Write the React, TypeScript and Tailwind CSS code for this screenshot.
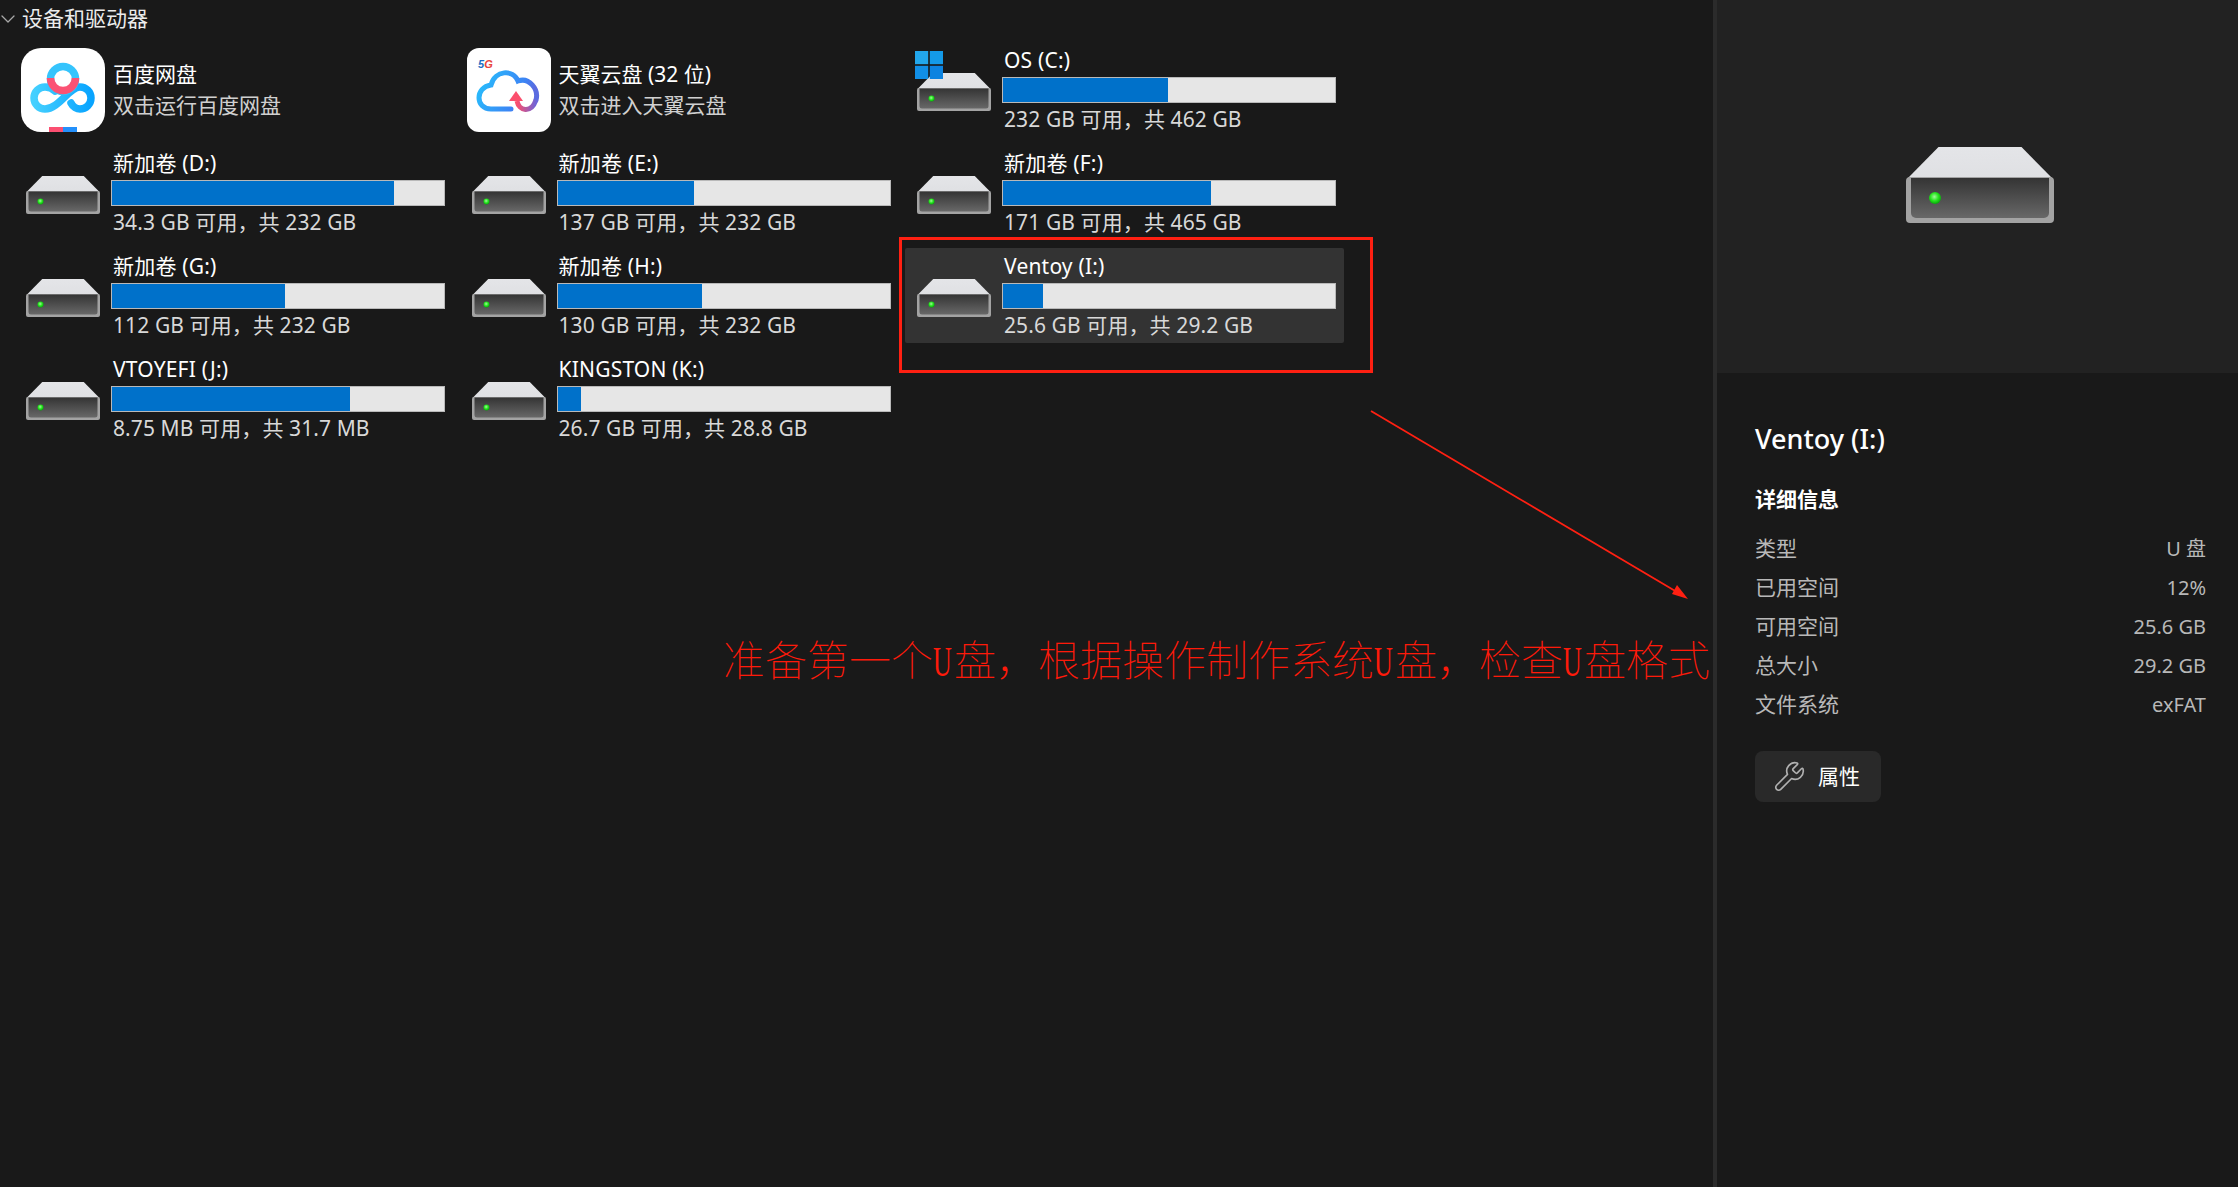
import React from 'react';
import { ChevronDown, Wrench } from 'lucide-react';

const font = { fontFamily: '"Noto Sans", "Noto Sans CJK SC", sans-serif' };

interface Drive {
  name: string;
  status: string;
  used: number;
  selected?: boolean;
  windows?: boolean;
}

function DriveIcon({ className }: { className: string }) {
  return (
    <svg viewBox="0 0 148 76" className={className}>
      <defs>
        <linearGradient id="driveFace" x1="0" y1="0" x2="0" y2="1">
          <stop offset="0" stopColor="#343434" />
          <stop offset="1" stopColor="#686868" />
        </linearGradient>
        <linearGradient id="driveTop" x1="0" y1="0" x2="0" y2="1">
          <stop offset="0" stopColor="#e4e5e8" />
          <stop offset="1" stopColor="#dfe0e3" />
        </linearGradient>
        <radialGradient id="driveLed" cx="0.45" cy="0.4" r="0.6">
          <stop offset="0" stopColor="#a4f79c" />
          <stop offset="0.55" stopColor="#27e61f" />
          <stop offset="1" stopColor="#07a80a" />
        </radialGradient>
      </defs>
      <path d="M32.5 0H115.5L147 32H1Z" fill="url(#driveTop)" />
      <rect x="0" y="30" width="148" height="46" rx="4" fill="#a3a3a3" />
      <path d="M5 31H143V66a5 5 0 0 1-5 5H10a5 5 0 0 1-5-5Z" fill="url(#driveFace)" />
      <circle cx="29" cy="51" r="6" fill="url(#driveLed)" />
    </svg>
  );
}

function WindowsLogo() {
  return (
    <svg viewBox="0 0 28 28" className="absolute left-[10px] top-[9px] h-[28px] w-[28px]">
      <rect x="0" y="0" width="13.2" height="13.2" fill="#22a7ec" />
      <rect x="14.8" y="0" width="13.2" height="13.2" fill="#149ae8" />
      <rect x="0" y="14.8" width="13.2" height="13.2" fill="#118fe6" />
      <rect x="14.8" y="14.8" width="13.2" height="13.2" fill="#0c83e0" />
    </svg>
  );
}

function BaiduIcon() {
  return (
    <svg viewBox="0 0 84 84" className="h-[84px] w-[84px]">
      <defs>
        <linearGradient id="baiduBlue" x1="0" y1="0" x2="1" y2="0">
          <stop offset="0" stopColor="#45d0ff" />
          <stop offset="1" stopColor="#08a4ff" />
        </linearGradient>
        <clipPath id="baiduClip">
          <rect width="84" height="84" rx="20" />
        </clipPath>
      </defs>
      <rect width="84" height="84" rx="20" fill="#fff" />
      <path
        d="M50 55C52 59 56 61 59 61A11 11 0 0 0 59 39C48 39 38 61 24 61A11 11 0 0 1 24 39C28 39 31 40 34 43"
        fill="none"
        stroke="url(#baiduBlue)"
        strokeWidth="7.5"
        strokeLinecap="round"
      />
      <circle cx="42" cy="31" r="12.5" fill="none" stroke="#35c4fd" strokeWidth="7.5" />
      <path d="M29.5 30A12.5 12.5 0 0 0 54.5 30" fill="none" stroke="#fb5274" strokeWidth="7.5" />
      <g clipPath="url(#baiduClip)">
        <rect x="28" y="79" width="14" height="5" fill="#fb4f71" />
        <rect x="42" y="79" width="14" height="5" fill="#2390fb" />
      </g>
    </svg>
  );
}

function TianyiIcon() {
  return (
    <svg viewBox="0 0 84 84" className="h-[84px] w-[84px]">
      <defs>
        <linearGradient id="cloudBlue" x1="0" y1="0" x2="1" y2="0.3">
          <stop offset="0" stopColor="#25c3fd" />
          <stop offset="0.8" stopColor="#3d83f4" />
          <stop offset="1" stopColor="#5a6be0" />
        </linearGradient>
        <linearGradient id="cloudTail" x1="0" y1="0" x2="1" y2="0">
          <stop offset="0" stopColor="#fb4f6d" />
          <stop offset="1" stopColor="#6d63d8" />
        </linearGradient>
      </defs>
      <rect width="84" height="84" rx="12" fill="#fff" />
      <text x="11" y="20" fontSize="11" fontWeight="700" fontStyle="italic" fontFamily="Liberation Sans, sans-serif">
        <tspan fill="#1c6fc4">5</tspan>
        <tspan fill="#e8443c">G</tspan>
      </text>
      <path
        d="M44 61H24C8 61 8 39 24 37C28 22 46 21 51 33C62 29 72 41 69 52"
        fill="none"
        stroke="url(#cloudBlue)"
        strokeWidth="5"
        strokeLinecap="round"
      />
      <path d="M50 53C52 63 64 66 69 52" fill="none" stroke="url(#cloudTail)" strokeWidth="5" />
      <path d="M49 43L42 53H56Z" fill="#fb4f6d" />
    </svg>
  );
}

function DriveTile({ drive }: { drive: Drive }) {
  return (
    <div
      className={
        'relative flex h-[95px] w-[439px] rounded-[2px] pr-2 ' + (drive.selected ? 'bg-[#333333]' : '')
      }
    >
      {drive.windows && <WindowsLogo />}
      <div className="flex w-[97px] shrink-0 justify-start pl-3 pt-[31px]">
        <DriveIcon className="h-[38px] w-[74px]" />
      </div>
      <div className="flex flex-1 flex-col">
        <div className="h-[35px] pl-[2px] text-[21px] leading-[36px] tracking-[0.2px] text-white">{drive.name}</div>
        <div className="h-[26px] border border-[#b9b9b9] bg-[#e6e6e6]">
          <div className="h-full bg-[#0071ca]" style={{ width: drive.used + '%' }} />
        </div>
        <div className="pl-[2px] text-[21px] leading-[33px] tracking-[0.1px] text-[#d8d8d8]">{drive.status}</div>
      </div>
    </div>
  );
}

function AppTile({ icon, name, desc }: { icon: React.ReactNode; name: string; desc: string }) {
  return (
    <div className="flex h-[95px] w-[439px] pl-[7px] pt-[6px]">
      <div className="h-[84px] w-[84px] shrink-0">{icon}</div>
      <div className="flex flex-col pl-2 pt-[10px]">
        <div className="text-[21px] leading-[32px] text-white">{name}</div>
        <div className="text-[21px] leading-[31px] text-[#d0d0d0]">{desc}</div>
      </div>
    </div>
  );
}

function NarrowU() {
  return <span className="inline-block w-[21px] origin-left scale-x-[0.62] font-normal">U</span>;
}

const rows: Drive[] = [
  { name: '新加卷 (D:)', status: '34.3 GB 可用，共 232 GB', used: 84.8 },
  { name: '新加卷 (E:)', status: '137 GB 可用，共 232 GB', used: 41 },
  { name: '新加卷 (F:)', status: '171 GB 可用，共 465 GB', used: 62.6 },
  { name: '新加卷 (G:)', status: '112 GB 可用，共 232 GB', used: 52 },
  { name: '新加卷 (H:)', status: '130 GB 可用，共 232 GB', used: 43.5 },
  { name: 'Ventoy (I:)', status: '25.6 GB 可用，共 29.2 GB', used: 12, selected: true },
  { name: 'VTOYEFI (J:)', status: '8.75 MB 可用，共 31.7 MB', used: 71.6 },
  { name: 'KINGSTON (K:)', status: '26.7 GB 可用，共 28.8 GB', used: 7.2 },
];

const details = [
  ['类型', 'U 盘'],
  ['已用空间', '12%'],
  ['可用空间', '25.6 GB'],
  ['总大小', '29.2 GB'],
  ['文件系统', 'exFAT'],
];

export default function App() {
  return (
    <div className="flex h-screen w-full overflow-hidden bg-[#191919]" style={font}>
      <div className="relative h-full w-[1713px] shrink-0">
        <div className="flex h-[42px] items-center pb-[4px] text-[21px] text-[#ececec]">
          <ChevronDown className="-ml-1 h-6 w-6 text-[#a8a8a8]" strokeWidth={1.3} />
          <span className="ml-[2px]">设备和驱动器</span>
        </div>
        <div className="grid grid-cols-[445.5px_445.5px_445.5px] gap-y-2 pl-[14px]">
          <AppTile icon={<BaiduIcon />} name="百度网盘" desc="双击运行百度网盘" />
          <AppTile icon={<TianyiIcon />} name="天翼云盘 (32 位)" desc="双击进入天翼云盘" />
          <DriveTile drive={{ name: 'OS (C:)', status: '232 GB 可用，共 462 GB', used: 49.7, windows: true }} />
          {rows.map((d) => (
            <DriveTile key={d.name} drive={d} />
          ))}
        </div>

        {/* red annotation drawn over the screenshot */}
        <div className="absolute left-[899px] top-[237px] h-[136px] w-[474px] border-[3px] border-[#ff2012]" />
        <svg className="absolute left-[1360px] top-[400px] h-[210px] w-[340px]" viewBox="0 0 340 210">
          <path d="M11 11L322 195" stroke="#ff2012" strokeWidth="1.8" />
          <path d="M328 199L312 194L317 185Z" fill="#ff2012" />
        </svg>
        <div
          className="absolute left-[723px] top-[635px] whitespace-nowrap text-[42px] leading-[54px] font-thin text-[#ff1a0a]"
          style={{ fontFamily: '"Liberation Serif", "Noto Sans CJK SC", serif' }}
        >
          准备第一个<NarrowU />盘，根据操作制作系统<NarrowU />盘，检查<NarrowU />盘格式
        </div>
      </div>

      <div className="h-full w-1 shrink-0 bg-[#2b2b2b]" />

      <div className="flex h-full flex-1 flex-col">
        <div className="flex h-[373px] bg-[#222222] pl-[189px] pt-[147px]">
          <DriveIcon className="h-[76px] w-[148px]" />
        </div>
        <div className="flex flex-1 flex-col pl-[38px] pr-[32px] pt-[47px]">
          <div className="text-[27px] leading-[38px] font-medium text-white">Ventoy (I:)</div>
          <div className="mt-[22px] text-[21px] leading-[38px] font-bold text-white">详细信息</div>
          <div className="mt-[11px] flex flex-col">
            {details.map(([k, v]) => (
              <div key={k} className="flex h-[39px] items-center justify-between text-[21px] text-[#b8b8b8]">
                <span>{k}</span>
                <span className="text-[20px]">{v}</span>
              </div>
            ))}
          </div>
          <button className="mt-[27px] flex h-[51px] w-[126px] items-center rounded-[8px] bg-[#292929] pl-[18px] text-[21px] text-white">
            <Wrench className="h-[33px] w-[33px] text-[#b0b0b0]" strokeWidth={1.2} />
            <span className="ml-3">属性</span>
          </button>
        </div>
      </div>
    </div>
  );
}
